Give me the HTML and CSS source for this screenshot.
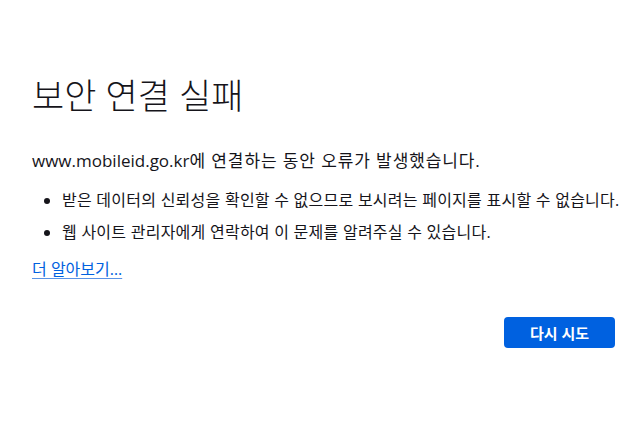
FILE: index.html
```html
<!DOCTYPE html>
<html lang="ko">

<head>
    <meta charset="UTF-8">
    <title>보안 연결 실패</title>
    <link rel="stylesheet" href="styles.css">
</head>

<body>
    <div class="container">
        <h1 class="title">보안 연결 실패</h1>

        <p class="intro"><span class="host">www.mobileid.go.kr</span>에 연결하는 동안 오류가 발생했습니다.</p>

        <ul class="details">
            <li>받은 데이터의 신뢰성을 확인할 수 없으므로 보시려는 페이지를 표시할 수 없습니다.</li>
            <li>웹 사이트 관리자에게 연락하여 이 문제를 알려주실 수 있습니다.</li>
        </ul>

        <a class="learn-more" href="#">더 알아보기…</a>

        <div class="actions">
            <button class="retry">다시 시도</button>
        </div>
    </div>
</body>

</html>
```

FILE: styles.css
```css
/* Page */
body {
    margin: 0;
    background: #fff;
    color: #15141a;
    font-family: "Open Sans", "Noto Sans CJK KR", sans-serif;
    font-size: 16px;
}

/* Main column */
.container {
    width: 583px;
    padding: 72px 0 0 32px;
}

/* Heading */
.title {
    margin: 0 0 28px;
    font-size: 35px;
    font-weight: 300;
    line-height: 48px;
}

/* Text */
.intro {
    margin: 0 0 13px;
    font-size: 17px;
    line-height: 26px;
    letter-spacing: 0.9px;
}

.intro .host {
    letter-spacing: 0;
}

.details {
    margin: 0 0 11px;
    padding-left: 30px;
    letter-spacing: 0.25px;
}

.details li {
    line-height: 26px;
    margin-bottom: 6px;
    white-space: nowrap;
}

/* Link */
.learn-more {
    color: #0061e0;
    text-decoration: underline;
    text-decoration-color: #5a93e6;
    text-underline-offset: 3px;
    line-height: 26px;
}

/* Button row */
.actions {
    display: flex;
    justify-content: flex-end;
    margin-top: 35px;
}

.retry {
    background: #0061e0;
    color: #fff;
    border: none;
    border-radius: 4px;
    font-family: "Open Sans", "Noto Sans CJK KR", sans-serif;
    font-size: 15px;
    font-weight: 700;
    padding: 0 26px;
    height: 31px;
}
```
